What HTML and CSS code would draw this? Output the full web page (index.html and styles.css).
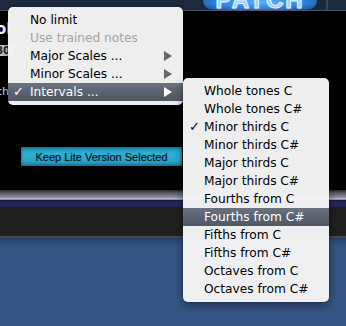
FILE: index.html
```html
<!DOCTYPE html>
<html>
<head>
<meta charset="utf-8">
<link rel="stylesheet" href="styles.css">
</head>
<body>
<div class="app">
  <header class="topbar">
    <div class="logo"><span class="logo-text">PATCH</span></div>
    <div class="sep"></div>
  </header>
  <section class="panel">
    <div class="title">ol</div>
    <div class="field">80</div>
    <div class="label">ch</div>
    <button class="keep">Keep Lite Version Selected</button>
  </section>
  <div class="strip-metal"></div>
  <div class="strip-navy"></div>
  <div class="strip-dark"></div>
  <div class="desk"></div>
</div>

<ul class="menu main">
  <li class="item"><span class="mark"></span><span class="text">No limit</span></li>
  <li class="item disabled"><span class="mark"></span><span class="text">Use trained notes</span></li>
  <li class="item"><span class="mark"></span><span class="text">Major Scales ...</span><span class="arrow"></span></li>
  <li class="item"><span class="mark"></span><span class="text">Minor Scales ...</span><span class="arrow"></span></li>
  <li class="item active"><span class="mark">✓</span><span class="text">Intervals ...</span><span class="arrow"></span></li>
</ul>

<ul class="menu sub">
  <li class="item"><span class="mark"></span><span class="text">Whole tones C</span></li>
  <li class="item"><span class="mark"></span><span class="text">Whole tones C#</span></li>
  <li class="item"><span class="mark">✓</span><span class="text">Minor thirds C</span></li>
  <li class="item"><span class="mark"></span><span class="text">Minor thirds C#</span></li>
  <li class="item"><span class="mark"></span><span class="text">Major thirds C</span></li>
  <li class="item"><span class="mark"></span><span class="text">Major thirds C#</span></li>
  <li class="item"><span class="mark"></span><span class="text">Fourths from C</span></li>
  <li class="item active"><span class="mark"></span><span class="text">Fourths from C#</span></li>
  <li class="item"><span class="mark"></span><span class="text">Fifths from C</span></li>
  <li class="item"><span class="mark"></span><span class="text">Fifths from C#</span></li>
  <li class="item"><span class="mark"></span><span class="text">Octaves from C</span></li>
  <li class="item"><span class="mark"></span><span class="text">Octaves from C#</span></li>
</ul>
</body>
</html>
```

FILE: styles.css
```css
html, body {
  margin: 0;
  padding: 0;
}
body {
  width: 346px;
  height: 326px;
  overflow: hidden;
  position: relative;
  background: #365584;
  font-family: "DejaVu Sans", sans-serif;
}
.app {
  display: flex;
  flex-direction: column;
  height: 326px;
}
.topbar {
  height: 10px;
  flex: none;
  background: #1c2a3c;
  border-bottom: 1px solid #44546a;
  display: flex;
  overflow: hidden;
  position: relative;
}
.logo {
  margin-left: 203px;
  width: 114px;
  height: 10px;
  border-radius: 0 0 14px 14px;
  background: radial-gradient(ellipse at 50% 20%, #5fb2ff 0%, #2f83da 55%, #1d5aa4 85%, #1c2a3c 100%);
  display: flex;
  justify-content: center;
  align-items: flex-end;
  overflow: hidden;
}
.logo-text {
  font-family: "Liberation Sans", sans-serif;
  font-weight: bold;
  font-size: 24px;
  line-height: 24px;
  letter-spacing: 2px;
  color: #9fd0ff;
  margin-bottom: -2px;
  -webkit-text-stroke: 1px #e8f4ff;
  text-shadow: 0 0 2px #7fc0ff;
}
.sep {
  margin-left: 9px;
  width: 2px;
  background: #3a4658;
}
.panel {
  height: 179px;
  flex: none;
  background: #000;
  display: flex;
  flex-direction: column;
  align-items: flex-start;
  padding-top: 10px;
  box-sizing: border-box;
  overflow: hidden;
}
.title {
  color: #fff;
  font-weight: bold;
  font-size: 15px;
  line-height: 16px;
  margin-left: -4px;
}
.field {
  margin-top: 8px;
  height: 11px;
  line-height: 11px;
  font-size: 10px;
  font-weight: bold;
  background: #c9c9c9;
  color: #222;
  padding: 0 4px;
  margin-left: -8px;
}
.label {
  margin-top: 30px;
  color: #e0e0e0;
  font-size: 11px;
  line-height: 12px;
  margin-left: -4px;
}
.keep {
  margin-top: 49px;
  margin-left: 21px;
  width: 161px;
  height: 19px;
  padding: 0;
  border: none;
  border-radius: 1px;
  font-family: "Liberation Sans", sans-serif;
  font-size: 11px;
  color: #0b1820;
  text-shadow: 0 0 1px rgba(20, 60, 80, 0.6);
  background: linear-gradient(180deg, #1c8db2 0%, #2fb0d2 35%, #2aa8ca 70%, #1984a8 100%);
  box-shadow: inset 0 0 3px rgba(0, 50, 80, 0.7);
}
.strip-metal {
  height: 10px;
  flex: none;
  background: linear-gradient(180deg, #26262c 0%, #5a5a66 30%, #7c7c88 60%, #9a9aa6 80%, #c8c8d0 90%, #55556a 100%);
}
.strip-navy {
  height: 8px;
  flex: none;
  background: linear-gradient(180deg, #15163a 0%, #24255c 30%, #23245a 80%, #16173a 100%);
}
.strip-dark {
  height: 28px;
  flex: none;
  background: #202020;
  border-bottom: 2px solid #4a4a4a;
}
.desk {
  flex: 1;
  background: linear-gradient(180deg, #243d62 0px, #2f4c78 4px, #365584 10px, #365584 100%);
}

.menu {
  position: absolute;
  margin: 0;
  padding: 4px 0;
  list-style: none;
  background: rgba(243, 243, 244, 0.98);
  border-radius: 5px;
  box-shadow: 0 3px 10px rgba(0, 0, 0, 0.45), 0 0 1px rgba(0, 0, 0, 0.4);
  font-size: 12.2px;
  color: #000;
}
.main {
  left: 8px;
  top: 7px;
  width: 175px;
}
.sub {
  left: 183px;
  top: 78px;
  width: 146px;
}
.item {
  display: flex;
  align-items: center;
  height: 18px;
  line-height: 18px;
  padding-right: 11px;
  white-space: nowrap;
}
.mark {
  width: 17px;
  padding-left: 5px;
  flex: none;
  font-size: 13px;
  font-weight: bold;
}
.sub .mark {
  width: 15px;
  padding-left: 6px;
}
.text {
  flex: 1;
}
.disabled {
  color: #a3a3a3;
}
.arrow {
  width: 0;
  height: 0;
  border-left: 8px solid #666;
  border-top: 5px solid transparent;
  border-bottom: 5px solid transparent;
}
.active {
  background: linear-gradient(180deg, #6a737f 0%, #5a636f 50%, #505965 100%);
  color: #fff;
}
.active .arrow {
  border-left-color: #fff;
}
```
